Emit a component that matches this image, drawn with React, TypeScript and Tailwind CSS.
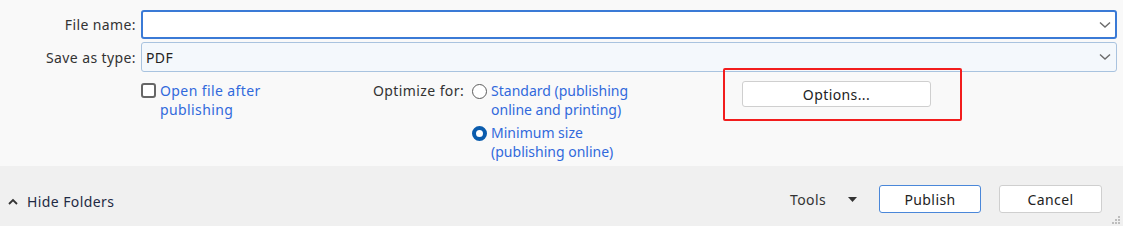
import React from 'react'

const font = { fontFamily: '"Noto Sans", "Open Sans", sans-serif' }

function Chevron() {
  return (
    <svg width="12" height="8" viewBox="0 0 12 8" className="shrink-0">
      <path d="M1 1.5 L6 6 L11 1.5" fill="none" stroke="#6b6b6b" strokeWidth="1.4" />
    </svg>
  )
}

function Radio({ checked }: { checked?: boolean }) {
  return checked ? (
    <span className="mt-[3px] h-[15px] w-[15px] shrink-0 rounded-full border-[4px] border-[#0b5cad] bg-white" />
  ) : (
    <span className="mt-[3px] h-[15px] w-[15px] shrink-0 rounded-full border border-[#5c5c5c] bg-white" />
  )
}

export default function App() {
  return (
    <div
      className="flex h-[226px] w-[1123px] flex-col overflow-hidden bg-[#f9f9f9] text-[14px] tracking-[0.4px] text-[#333]"
      style={font}
    >
      <div className="flex h-[166px] flex-col">
        <div className="mt-[10px] flex h-[29px] items-center">
          <div className="w-[141px] pr-[5px] text-right">File name:</div>
          <div className="flex h-full w-[976px] items-center justify-end rounded-[3px] border-2 border-[#3a7ad6] bg-white pr-[4px]">
            <Chevron />
          </div>
        </div>
        <div className="mt-[3px] flex h-[30px] items-center">
          <div className="w-[141px] pr-[5px] text-right">Save as type:</div>
          <div className="flex h-full w-[976px] items-center justify-between rounded-[3px] border border-[#a9c3df] bg-[#f4f8fc] pl-[4px] pr-[5px]">
            <span className="text-[#222]">PDF</span>
            <Chevron />
          </div>
        </div>

        <div className="mt-[9px] flex leading-[19px]">
          <div className="w-[141px]" />
          <div className="flex w-[232px] items-start gap-[4px]">
            <span className="mt-[2px] h-[15px] w-[15px] shrink-0 rounded-[3px] border-2 border-[#666] bg-white" />
            <span className="w-[125px] text-[#3169dc]">Open file after publishing</span>
          </div>
          <div className="flex w-[350px] items-start">
            <span className="mr-[8px]">Optimize for:</span>
            <div className="flex flex-col gap-[4px] tracking-normal">
              <div className="flex items-start gap-[4px]">
                <Radio />
                <span className="w-[140px] text-[#3169dc]">Standard (publishing online and printing)</span>
              </div>
              <div className="flex items-start gap-[4px]">
                <Radio checked />
                <span className="w-[140px] text-[#3169dc]">Minimum size (publishing online)</span>
              </div>
            </div>
          </div>
          <div className="relative">
            <button className="ml-[19px] h-[26px] w-[189px] rounded-[3px] border border-[#cfcfcf] bg-white text-[#222]">
              Options...
            </button>
            <div className="pointer-events-none absolute left-0 top-[-13px] h-[53px] w-[239px] rounded-[2px] border-2 border-[#f21d1d]" />
          </div>
        </div>
      </div>

      <div className="relative flex flex-1 items-center bg-[#f0f0f0] pt-[6px]">
        <div className="ml-[8px] flex items-center gap-[9px] pt-[4px]">
          <svg width="10" height="7" viewBox="0 0 10 7">
            <path d="M1 6 L5 2 L9 6" fill="none" stroke="#333" strokeWidth="1.8" />
          </svg>
          <span className="text-[#1f2a44]">Hide Folders</span>
        </div>
        <div className="ml-auto flex items-center">
          <span className="mr-[22px]">Tools</span>
          <svg width="9" height="5" viewBox="0 0 9 5" className="mr-[22px]">
            <path d="M0 0 L9 0 L4.5 5 Z" fill="#333" />
          </svg>
          <button className="h-[28px] w-[102px] rounded-[3px] border border-[#4a87d9] bg-white text-[#222]">
            Publish
          </button>
          <button className="ml-[18px] mr-[21px] h-[28px] w-[103px] rounded-[3px] border border-[#cfcfcf] bg-white text-[#222]">
            Cancel
          </button>
        </div>
        <svg width="10" height="10" viewBox="0 0 10 10" className="absolute bottom-[1px] right-[2px]">
          {[
            [8, 2],
            [8, 5],
            [5, 5],
            [8, 8],
            [5, 8],
            [2, 8],
          ].map(([x, y], i) => (
            <rect key={i} x={x - 1} y={y - 1} width="2" height="2" fill="#bdbdbd" />
          ))}
        </svg>
      </div>
    </div>
  )
}
